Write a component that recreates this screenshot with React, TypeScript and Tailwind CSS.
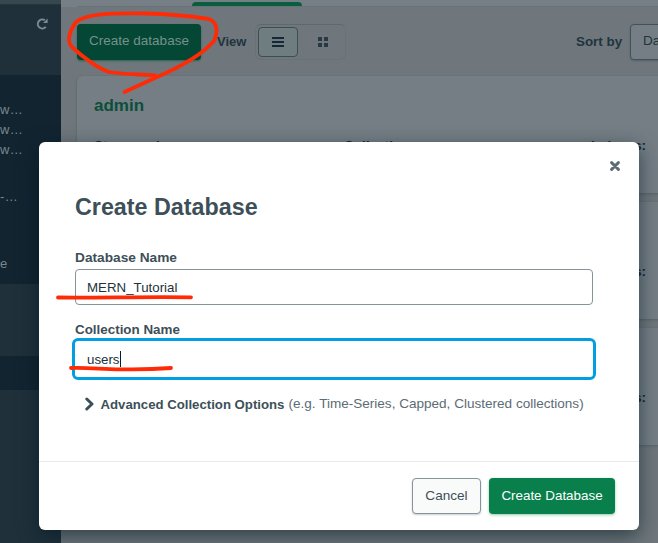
const stats = ['Storage size:', 'Collections:', 'Indexes:'];

function DatabaseCard({ name }: { name: string }) {
  return (
    <section className="h-[117px] w-[620px] shrink-0 rounded-md bg-[#757e85] pl-[17px] pt-[19px] shadow-[0_1px_3px_#56636a]">
      <h2 className="h-[22px] text-[17px] font-bold leading-[22px] text-[#0b4f3b]">{name}</h2>
      <div className="mt-[20px] flex text-[13.6px] font-bold leading-[17px] text-[#142730]">
        <span className="w-[250px]">{stats[0]}</span>
        <span className="w-[247px]">{stats[1]}</span>
        <span>{stats[2]}</span>
      </div>
    </section>
  );
}

function Sidebar() {
  return (
    <aside className="flex w-[61px] shrink-0 flex-col overflow-hidden bg-[#1f303a] text-[13px] text-[#7b868c]">
      <div className="h-[5px] shrink-0 border-b border-[#2a3438] bg-[#35474f]" />
      <div className="flex h-[70px] shrink-0 justify-end pr-[13px] pt-[13px]">
        <svg width="12" height="12" viewBox="0 0 12 12" fill="none" stroke="#7d8a91" strokeWidth="2">
          <path d="M9.8 8.8A4.5 4.5 0 1 1 8.8 2.2" />
          <path d="M11.6 .4v4.6H7z" fill="#7d8a91" stroke="none" />
        </svg>
      </div>
      <div className="h-[209px] shrink-0 bg-[#112430] pt-[25px] leading-5 tracking-[0.3px]">
        <div>w…</div>
        <div>w…</div>
        <div>w…</div>
        <div className="mt-[27px]">-…</div>
        <div className="mt-[47px]">e</div>
      </div>
      <div className="mt-[72px] h-[34px] shrink-0 bg-[#112430]" />
    </aside>
  );
}

function Toolbar() {
  return (
    <div className="flex h-[70px] shrink-0 items-start pl-4 pt-[17px] text-[13px] font-bold text-[#20343e]">
      <button className="h-9 w-[124px] shrink-0 rounded bg-[#044734] pb-px text-[13.5px] font-normal text-[#76918b] shadow-[0_1px_2px_#2b6653]">
        Create database
      </button>
      <span className="ml-4 w-[38px] shrink-0 leading-9">View</span>
      <div className="flex h-9 w-[91px] shrink-0 rounded-md border border-[#687379] border-t-[#5e696f] p-[2px]">
        <div className="flex h-[30px] w-10 items-center justify-center rounded border border-[#3b4d56] bg-[#6f7c80]">
          <svg width="12" height="10" fill="#142934"><path d="M0 0h12v2H0zM0 4h12v2H0zM0 8h12v2H0z" /></svg>
        </div>
        <div className="flex h-[30px] flex-1 items-center justify-center pl-1">
          <svg width="10" height="10" fill="#273a43"><path d="M0 0h4v4H0zM6 0h4v4H6zM0 6h4v4H0zM6 6h4v4H6z" /></svg>
        </div>
      </div>
      <span className="ml-[230px] w-[54px] shrink-0 text-[13.4px] leading-9">Sort by</span>
      <div className="h-9 w-[120px] shrink-0 rounded border border-[#41525a] bg-[#757e84] pl-3 text-[13.5px] font-normal leading-8 text-[#20343e] shadow-[0_1px_2px_#536167]">
        Da
      </div>
    </div>
  );
}

function CreateDatabaseDialog() {
  return (
    <div role="dialog" className="flex h-[388px] w-[600px] flex-col rounded-md bg-white text-[#3d4f58] shadow-[0_6px_20px_rgba(0,25,35,0.6)]">
      <div className="relative h-[319px] px-9 pt-[49px]">
        <button aria-label="Close" className="absolute right-[19px] top-[19px]">
          <svg width="10" height="10" viewBox="0 0 10 10" stroke="#5c6c75" strokeWidth="2.9" strokeLinecap="round">
            <path d="M1.6 1.6l6.8 6.8M8.4 1.6L1.6 8.4" />
          </svg>
        </button>
        <h1 className="h-8 text-[23.3px] font-bold leading-8">Create Database</h1>
        <label className="mt-[26px] block h-5 text-[13.7px] font-bold leading-[18px]">Database Name</label>
        <div className="h-9 w-[518px] rounded border border-[#889397] pl-[11px] text-[13.3px] leading-[35px] text-[#21313c]">MERN_Tutorial</div>
        <label className="mt-4 block h-5 text-[13.4px] font-bold leading-[18px]">Collection Name</label>
        <div className="-ml-[3px] -mt-[3px] flex h-[42px] w-[524px] items-center rounded-md border-[3px] border-[#019ee2] pl-3 text-[13.3px] text-[#21313c]">
          <span className="pt-px leading-4">users</span><span className="h-4 w-px bg-[#001e2b]" />
        </div>
        <div className="mt-[14px] flex h-5 items-center pl-[10px]">
          <svg width="9" height="14" viewBox="0 0 9 14" fill="none" stroke="#3d4f58" strokeWidth="3" strokeLinecap="round" strokeLinejoin="round">
            <path d="M1.8 2L7 7l-5.2 5" />
          </svg>
          <b className="ml-[6.500px] w-[188px] whitespace-nowrap pt-0.5 text-[13.2px] leading-4">Advanced Collection Options</b>
          <span className="whitespace-nowrap text-[13.55px] leading-4 text-[#5c6c75]">(e.g. Time-Series, Capped, Clustered collections)</span>
        </div>
      </div>
      <footer className="flex flex-1 justify-end gap-2 border-t border-[#e8edeb] pr-6 pt-4">
        <button className="h-9 w-[69px] rounded border border-[#889397] bg-[#f9fbfa] pt-px text-[13.6px] shadow-[0_1px_2px_#c9ced1]">Cancel</button>
        <button className="h-9 w-[126px] rounded bg-[#09804c] pt-px text-[13.4px] text-white shadow-[0_1px_3px_#8fc9ac]">Create Database</button>
      </footer>
    </div>
  );
}

export default function App() {
  return (
    <div className="relative h-[543px] w-[658px] overflow-hidden bg-[#6f777c] font-['Liberation_Sans',Arial,sans-serif]">
      <div className="flex h-full">
        <Sidebar />
        <main className="flex min-w-0 flex-1 flex-col overflow-hidden">
          <div className="flex h-[7px] shrink-0 items-end bg-[#777f86] pl-4">
            <div className="flex flex-1 items-end border-b border-[#687278] pl-[115px]">
              <div className="h-1 w-[110px] rounded-t bg-[#0a5e40]" />
            </div>
          </div>
          <Toolbar />
          <div className="-mt-px flex flex-col gap-[9px] pl-4">
            <DatabaseCard name="admin" />
            <DatabaseCard name="config" />
            <DatabaseCard name="local" />
          </div>
        </main>
      </div>
      <div className="absolute left-[39px] top-[142px]">
        <CreateDatabaseDialog />
      </div>
      <svg className="pointer-events-none absolute inset-0" width="658" height="543" fill="none" stroke="#ff2b06" strokeWidth="3.8" strokeLinecap="round" strokeLinejoin="round">
        <path d="M155 75.5C142 74 127 75 109 72C95 67 83 57 72 47C66 41 70 30 76 22C88 12 121 13.5 145 13.5C168 14 189 16 209 19C219 23 217 34 214 41C201 56 180 67 157 77L124.500 92" />
        <path d="M58 297.500C95 298 150 296.500 191 297.300" />
        <path d="M71 368C95 367 120 372 171 368" />
      </svg>
    </div>
  );
}
